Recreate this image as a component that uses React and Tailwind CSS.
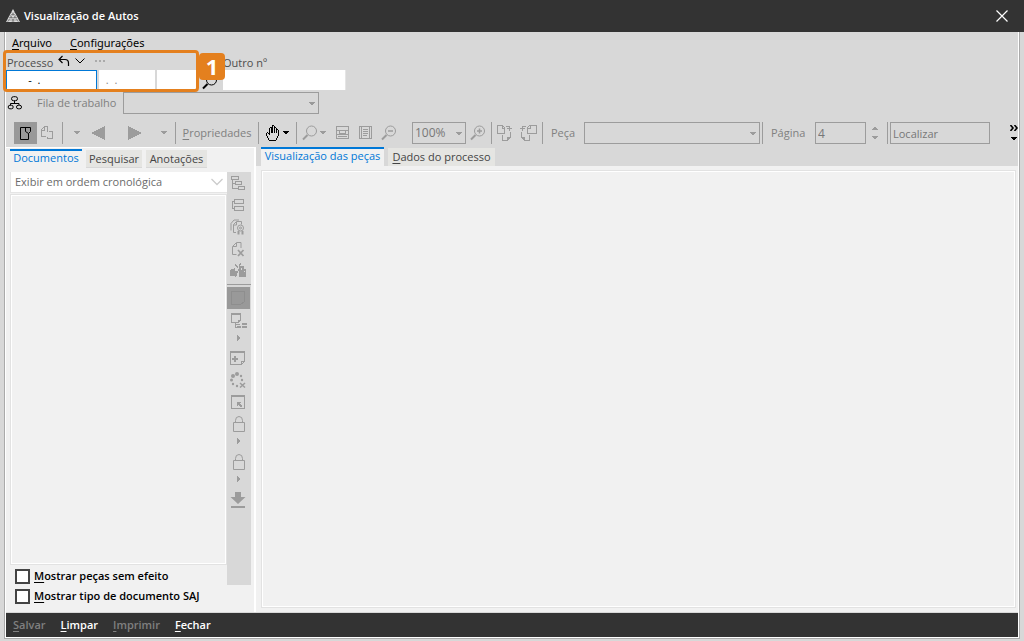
import React from "react";

function Icon({ w = 16, h = 16, crisp = true, className = "", children }) {
  return (
    <svg
      width={w}
      height={h}
      viewBox={`0 0 ${w} ${h}`}
      fill="none"
      stroke="currentColor"
      strokeWidth="1"
      shapeRendering={crisp ? "crispEdges" : "auto"}
      aria-hidden="true"
      className={`shrink-0 ${className}`}
    >
      {children}
    </svg>
  );
}

const Down = ({ className = "" }) => (
  <Icon w={6} h={4} className={className}>
    <path d="M0 0H6L3 3.5Z" fill="currentColor" stroke="none" />
  </Icon>
);

const Side = () => (
  <Icon w={4} h={6}>
    <path d="M0 0V6L3.5 3Z" fill="currentColor" stroke="none" />
  </Icon>
);

const Lock = () => (
  <Icon crisp={false}>
    <path d="M2.500 6.500h11v9h-11z" />
    <path d="M4.500 6V4.500Q4.500 .5 8 .5T11.500 4.500V6" />
  </Icon>
);

const Magnifier = ({ sign }) => (
  <Icon crisp={false}>
    <circle cx="9.500" cy="6" r="5" />
    <path d="M5.500 10L1 14.500" strokeWidth="2" />
    {sign && <path d="M7 6h5" strokeWidth="1.500" />}
    {sign === "plus" && <path d="M9.500 3.500v5" strokeWidth="1.500" />}
  </Icon>
);

const Separator = () => <span className="h-[22px] w-px shrink-0 bg-[#9c9c9c]" />;

function ToolButton({ label, className = "", children }) {
  return (
    <button type="button" aria-label={label} className={`flex shrink-0 items-center justify-center ${className}`}>
      {children}
    </button>
  );
}

function Combo({ label, value = "", className = "" }) {
  return (
    <span className={`relative flex h-[22px] shrink-0 ${className}`}>
      <select
        disabled
        aria-label={label}
        defaultValue={value}
        className="w-full appearance-none border border-[#9c9c9c] bg-[#d8d8d8] px-0.5 text-xs text-[#777] opacity-100"
      >
        <option value={value}>{value}</option>
      </select>
      <Down className="absolute right-1 top-[10px]" />
    </span>
  );
}

function Accel({ text }) {
  return (
    <span>
      <span className="underline underline-offset-2">{text[0]}</span>
      {text.slice(1)}
    </span>
  );
}

function TitleBar() {
  return (
    <header className="flex h-8 shrink-0 items-center justify-between bg-[#333] pl-1.5 pr-4 text-white">
      <div className="flex items-center gap-1">
        <Icon w={14} h={16} crisp={false}>
          <path d="M7 1L0 14H14Z" fill="#dedede" stroke="none" />
          <path d="M5.500 4l7 10M8.500 4l-7 10M4 7l4 7M10 7l-4 7M3 9.500h8M1.500 12h11M5 6.500h4" stroke="#555" strokeWidth=".5" />
        </Icon>
        <h1 className="text-[11px] font-semibold leading-4">Visualização de Autos</h1>
      </div>
      <button type="button" aria-label="Fechar janela">
        <Icon w={12} h={12} crisp={false}>
          <path d="M.5 .5l11 11M11.500 .5L.5 11.500" strokeWidth="1.200" />
        </Icon>
      </button>
    </header>
  );
}

function ProcessBar() {
  return (
    <section className="flex h-[39px] items-end">
      <div className="relative h-[39px] w-[193px] shrink-0">
        <div className="flex h-[18px] items-center pt-1 text-[#4d4d4d]">
          <label htmlFor="processo" className="w-[52px] pl-px text-[11px] leading-4">Processo</label>
          <ToolButton label="Desfazer" className="h-4 w-3 text-black">
            <Icon w={12} h={12} crisp={false} className="-mt-1">
              <path d="M4.500 1L1 4.500L4.500 8M1 4.500h6Q10.500 4.500 10.500 8V11" strokeWidth="1.200" />
            </Icon>
          </ToolButton>
          <ToolButton label="Histórico" className="ml-1 h-4 w-3 text-black">
            <Icon w={10} h={6} crisp={false} className="-mt-1">
              <path d="M.5 .5L5 5L9.500 .5" />
            </Icon>
          </ToolButton>
          <ToolButton label="Mais opções" className="ml-2 h-4 w-3 text-[#aaa]">
            <Icon w={10} h={2} className="-mt-1">
              <path d="M0 1h2M4 1h2M8 1h2" strokeWidth="2" />
            </Icon>
          </ToolButton>
        </div>
        <div className="flex h-5 gap-0.5">
          <input id="processo" defaultValue="      -  ." className="w-[91px] border border-[#0078d7] bg-white px-1 text-[11px] outline-none" />
          <input aria-label="Ano e foro" defaultValue=" .  ." className="w-14 bg-white px-1 text-[11px] text-[#888] outline-none" />
          <input aria-label="Origem" className="min-w-0 flex-1 bg-white px-1 text-[11px] outline-none" />
        </div>
        <div className="pointer-events-none absolute -left-[3px] -top-0.5 h-[42px] w-[196px] rounded-sm border-3 border-[#e4801e]" />
        <div className="pointer-events-none absolute -right-[26px] top-px flex h-[27px] w-[26px] items-center justify-center rounded-sm bg-[#e4801e] text-[22px] font-bold text-white">
          1
        </div>
      </div>
      <ToolButton label="Pesquisar processo" className="h-[18px] w-6 pr-0.5 text-black">
        <Magnifier />
      </ToolButton>
      <div className="flex w-[123px] flex-col self-start">
        <label htmlFor="outro" className="flex h-[18px] items-center pt-1 text-[11px] text-[#4d4d4d]">Outro nº</label>
        <input id="outro" className="h-5 w-full border-r border-[#e5e5e5] bg-white px-1 text-[11px] outline-none" />
      </div>
    </section>
  );
}

function QueueBar() {
  return (
    <section className="flex h-6 items-center text-[#999]">
      <ToolButton label="Fluxo de trabalho" className="w-[18px] text-black">
        <Icon w={16} h={14} crisp={false}>
          <rect x="4.500" y=".7" width="6" height="4" rx="2" />
          <rect x="1.200" y="9.300" width="5" height="3.500" rx="1.700" />
          <rect x="9.500" y="9.300" width="5" height="3.500" rx="1.700" />
          <path d="M7.500 5v2M3.500 9V7.500h8.500V9" />
        </Icon>
      </ToolButton>
      <span className="w-[99px] pl-[13px] text-[11px] text-[#808080]">Fila de trabalho</span>
      <Combo label="Fila de trabalho" className="w-[196px]" />
    </section>
  );
}

function Toolbar() {
  return (
    <section className="mt-[7px] flex h-[25px] items-start overflow-hidden pl-2 text-[11px] text-[#9c9c9c]">
      <div className="flex h-[22px] min-w-0 flex-1 items-center">
        <ToolButton label="Painel" className="h-[22px] w-[23px] bg-[#999] text-black">
          <Icon w={13} h={14} crisp={false}>
            <path d="M1.500 1.500h10v4L9.500 7.500v6h-8zM6.500 2v3.500l3 2" />
          </Icon>
        </ToolButton>
        <ToolButton label="Páginas" className="w-[25px] pr-1.5">
          <Icon w={13} h={14}>
            <path d="M6 10.500H1.500v-7l3-3h3v5M8.500 5.500h4v7h-5v-2M4.500 1v3h-3" />
          </Icon>
        </ToolButton>
        <Separator />
        <ToolButton label="Opções anteriores" className="w-7"><Down /></ToolButton>
        <ToolButton label="Anterior" className="w-3.5">
          <Icon w={14} h={14}><path d="M14 0V14L0 7Z" fill="currentColor" stroke="none" /></Icon>
        </ToolButton>
        <ToolButton label="Próxima" className="ml-[23px] w-3.5">
          <Icon w={14} h={14}><path d="M0 0V14L14 7Z" fill="currentColor" stroke="none" /></Icon>
        </ToolButton>
        <ToolButton label="Opções seguintes" className="w-[33px] pl-[11px]"><Down /></ToolButton>
        <Separator />
        <button type="button" className="w-[82px] shrink-0 text-[#808080]"><Accel text="Propriedades" /></button>
        <Separator />
        <ToolButton label="Mover página" className="w-[37px] gap-1 text-black">
          <Icon w={13} h={16}>
            <path d="M3 15.500h7M2.500 15v-2M10.500 15v-2M1.500 13v-2M11.500 13v-2M.5 11V8M1 7.500h1M2.500 8v1M3.500 10V3M4 2.500h1M5.500 8V2M6 .500h1M6.500 1v7M7 .5h1M8.500 8V1M9 2.500h1M10.500 8V3M11 4.500h1M12.500 11V5" />
          </Icon>
          <Down />
        </ToolButton>
        <Separator />
        <ToolButton label="Lupa" className="w-[34px] gap-0.5"><Magnifier /><Down /></ToolButton>
        <ToolButton label="Ajustar à largura" className="w-[23px]">
          <Icon w={15} h={14}><path d="M1.500 .5h12v12h-12zM1 4.500h13M1 8.500h13M4.500 5v2h6v-2M3 10.500h9" /></Icon>
        </ToolButton>
        <ToolButton label="Página inteira" className="w-[23px]">
          <Icon w={15} h={14}><path d="M1.500 .5h12v12h-12zM3.500 1v12M11.500 1v12M5 3.500h5M5 5.500h5M5 7.500h5M5 9.500h4" /></Icon>
        </ToolButton>
        <ToolButton label="Reduzir" className="w-6"><Magnifier sign="minus" /></ToolButton>
        <Combo label="Zoom" value="100%" className="ml-[11px] w-[54px]" />
        <ToolButton label="Ampliar" className="w-6"><Magnifier sign="plus" /></ToolButton>
        <span className="ml-px flex"><Separator /></span>
        <ToolButton label="Girar à direita" className="w-[27px]">
          <Icon w={17} h={18}><path d="M.5 1.500h5l2 2v6h-7zM5.500 2v2h2M9 2.500h3.500v4M10 4.500h5M5.500 11v5h5l3-3V8M10.500 16v-3h3" /></Icon>
        </ToolButton>
        <ToolButton label="Girar à esquerda" className="mr-1 w-[19px]">
          <Icon w={17} h={18}><path d="M7.500 3.500l2-2h6.500v8h-8.500zM7.500 4.500h3V1.500M6 2.500H2.500v4M0 4.500h5M1.500 8v5l3 3h5v-5M1.500 13h3v3" /></Icon>
        </ToolButton>
        <Separator />
        <span className="w-[41px] shrink-0 pl-2 text-[#808080]">Peça</span>
        <Combo label="Peça" className="w-44" />
        <span className="ml-0.5 flex"><Separator /></span>
        <label htmlFor="pagina" className="w-[52px] shrink-0 pl-2 text-[#808080]">Página</label>
        <input id="pagina" disabled defaultValue="4" className="h-[22px] w-[51px] shrink-0 border border-[#9c9c9c] px-0.5 text-xs text-[#777]" />
        <div className="flex w-[21px] shrink-0 flex-col items-center gap-1.5 pr-[3px]">
          <button type="button" aria-label="Próxima página"><Down className="block rotate-180" /></button>
          <button type="button" aria-label="Página anterior"><Down className="block" /></button>
        </div>
        <Separator />
        <input aria-label="Localizar" disabled defaultValue="Localizar" className="ml-0.5 h-[22px] w-[100px] shrink-0 border border-[#9c9c9c] px-0.5 text-[11px] text-[#777]" />
      </div>
      <ToolButton label="Mais ferramentas" className="h-[22px] flex-col gap-1.5 text-black">
        <Icon w={8} h={6} crisp={false}><path d="M.5 0L3 3L.5 6M4.500 0L7 3L4.500 6" strokeWidth="1.600" /></Icon>
        <Down />
      </ToolButton>
    </section>
  );
}

function SideTools() {
  const slot = "h-[22px] w-full pr-0.5";
  return (
    <aside className="flex w-6 shrink-0 flex-col items-center bg-[#d8d8d8] text-[#9c9c9c]">
      <ToolButton label="Árvore" className={slot}>
        <Icon><path d="M1.500 1.500h7v3h-7zM5.500 6.500h6v3h-6zM8.500 11.500h6v3h-6zM2.500 5v8h6M2.500 8.500h3" /></Icon>
      </ToolButton>
      <ToolButton label="Lista" className={slot}>
        <Icon><path d="M4.500 2.500h9v4h-9zM4.500 9.500h9v4h-9zM2 4.500h2M2.500 4v8M2 11.500h2" /></Icon>
      </ToolButton>
      <ToolButton label="Assinaturas" className={slot}>
        <Icon crisp={false}>
          <path d="M6 13.500H3.500v-8l3-3h5v3M1 11.500v-7l3-3.500h5M6.500 3v3h-3" />
          <circle cx="10.500" cy="9" r="3" /><circle cx="10.500" cy="9" r="1" />
          <path d="M8.500 12v3.500M12.500 12v3.500" strokeWidth="2" />
        </Icon>
      </ToolButton>
      <ToolButton label="Excluir documento" className={slot}>
        <Icon crisp={false}><path d="M6.500 13.500H2.500v-8l4-4h4.500V7M6.500 2v3.500H3" /><path d="M8 9l5.500 6M13.500 9L8 15" strokeWidth="1.700" /></Icon>
      </ToolButton>
      <ToolButton label="Desmembrar" className={slot}>
        <Icon>
          <path d="M0 7l5-2v3h2v5H0zM9 3h5v11H9zM13 6h3v8h-3z" fill="currentColor" stroke="none" />
          <path d="M5 1l3 4M11 0L9 3M9 6l-4 8" /><path d="M11.500 5v2M14.500 8v1" stroke="#d8d8d8" />
        </Icon>
      </ToolButton>
      <hr className="my-0.5 w-full border-[#9c9c9c]" />
      <ToolButton label="Documento" className="h-[22px] w-[23px] self-start bg-[#999] pr-px text-[#8e8e8e]">
        <Icon><path d="M1.500 1.500h13v10l-4 3h-9z" /></Icon>
      </ToolButton>
      <ToolButton label="Organizar" className="h-6 w-full">
        <Icon><path d="M.5 .5h9v7l-2 2h-7zM0 1.500h10M7.500 9V7.500h2M4.500 10v4.500h4M5 11.500h4" /><path d="M11 11h5M11 14h5M6 14h4" strokeWidth="2" /></Icon>
      </ToolButton>
      <ToolButton label="Organizar: opções" className="h-2.5 w-full"><Side /></ToolButton>
      <ToolButton label="Nova nota" className="h-[30px] w-full pr-0.5">
        <Icon><path d="M.5 1.500h14v10l-3 3H.5zM0 2.500h15M11.500 14v-2.500h3" /><path d="M5 6v6M2 9h6" strokeWidth="2" /></Icon>
      </ToolButton>
      <ToolButton label="Limpar seleção" className="h-3.5 w-full pr-0.5">
        <Icon crisp={false}><g fill="currentColor" stroke="none"><circle cx="7" cy="2" r="2" /><circle cx="3" cy="4" r="2" /><circle cx="11" cy="4" r="1.200" /><circle cx="1.500" cy="8" r="1.500" /><circle cx="12" cy="8" r="1.200" /><circle cx="3" cy="12" r="1.200" /><circle cx="7" cy="14" r="1.200" /></g><path d="M10 11l5 4.500M15 11l-5 4.500" strokeWidth="1.500" /></Icon>
      </ToolButton>
      <ToolButton label="Abrir em nova janela" className="h-[30px] w-full pr-0.5">
        <Icon><path d="M1.500 1.500h13v13h-13z" /><path d="M1 2h14" strokeWidth="2" /><path d="M12 13L7.500 8.500M7.500 12V8.500H11" strokeWidth="1.500" /></Icon>
      </ToolButton>
      <ToolButton label="Bloquear" className="h-3.5 w-full"><Lock /></ToolButton>
      <ToolButton label="Bloquear: opções" className="h-5 w-full"><Side /></ToolButton>
      <ToolButton label="Sigilo" className="h-[22px] w-full"><Lock /></ToolButton>
      <ToolButton label="Sigilo: opções" className="h-3 w-full"><Side /></ToolButton>
      <ToolButton label="Baixar" className="h-[30px] w-full pr-0.5">
        <Icon crisp={false}><path d="M5 0h6v5h4.500L8 12L.5 5H5zM1 14h14v2H1z" fill="currentColor" stroke="none" /></Icon>
      </ToolButton>
    </aside>
  );
}

function Check({ id, label }) {
  return (
    <label htmlFor={id} className="flex h-5 items-center gap-1 text-[11px] font-semibold text-black">
      <input id={id} type="checkbox" className="size-[15px] shrink-0 appearance-none border-2 border-[#444] bg-white" />
      <Accel text={label} />
    </label>
  );
}

function DocumentsPanel() {
  const tab = "h-[18px] bg-[#e5e5e2] text-[#444] border-b border-[#d8d8d8] pt-px";
  return (
    <section className="flex w-[250px] shrink-0 flex-col border-r-2 border-t border-white bg-[#f1f1f1] pl-1 pt-px text-[11px]">
      <div role="tablist" className="flex items-end gap-1">
        <button role="tab" aria-selected="true" type="button" className="h-[19px] w-[72px] border-t-2 border-[#0078d7] pb-1 leading-3 text-[#0078d7]">Documentos</button>
        <button role="tab" aria-selected="false" type="button" className={`w-14 ${tab}`}>Pesquisar</button>
        <button role="tab" aria-selected="false" type="button" className={`w-[61px] ${tab}`}>Anotações</button>
      </div>
      <div className="mt-1 flex flex-1">
        <div className="flex min-w-0 flex-1 flex-col">
          <span className="relative flex h-[21px] border-b border-l border-[#e5e5e5]">
            <select aria-label="Ordem de exibição" className="w-full appearance-none bg-white px-1 text-[11px] text-[#6b6b6b] outline-none">
              <option>Exibir em ordem cronológica</option>
            </select>
            <Icon w={12} h={8} crisp={false} className="pointer-events-none absolute right-1 top-1.5 text-[#ccc]">
              <path d="M.5 1L6 6.500L11.500 1" strokeWidth="1.300" />
            </Icon>
          </span>
          <div className="mt-px flex flex-1 border border-[#e2e2e2]"><div className="flex-1 border border-white" /></div>
          <div className="flex flex-col pb-1.5 pl-[5px] pt-px">
            <Check id="sem-efeito" label="Mostrar peças sem efeito" />
            <Check id="tipo-saj" label="Mostrar tipo de documento SAJ" />
          </div>
        </div>
        <div className="mb-[27px] mr-[3px] flex"><SideTools /></div>
      </div>
    </section>
  );
}

function Viewer() {
  return (
    <section className="flex min-w-0 flex-1 flex-col">
      <div role="tablist" className="flex h-[19px] items-end gap-1 bg-[#d8d8d8] pl-[5px] text-[11px]">
        <button role="tab" aria-selected="true" type="button" className="h-[19px] w-[123px] border-t-2 border-[#0078d7] bg-[#f1f1f1] pb-1 leading-3 text-[#0078d7]">Visualização das peças</button>
        <button role="tab" aria-selected="false" type="button" className="h-[18px] w-[107px] bg-[#e5e5e2] text-[#444]"><Accel text="Dados do processo" /></button>
      </div>
      <div className="flex flex-1 bg-[#f1f1f1] pb-1 pl-[5px] pr-0.5 pt-1">
        <div className="flex flex-1 border border-[#e2e2e2]"><div className="flex-1 border border-white" /></div>
      </div>
    </section>
  );
}

export default function App() {
  return (
    <div className="flex min-h-screen flex-col bg-[#d8d8d8] font-['Open_Sans','Noto_Sans',sans-serif]">
      <TitleBar />
      <div className="mx-1 mb-0.5 flex flex-1 flex-col border border-t-0 border-[#aaa]">
        <main className="flex flex-1 flex-col border border-t-0 border-white">
          <nav className="flex h-5 items-center gap-[18px] pl-1.5 pt-0.5 font-['Noto_Sans',sans-serif] text-[11px] text-black">
            <button type="button"><Accel text="Arquivo" /></button>
            <button type="button"><Accel text="Configurações" /></button>
          </nav>
          <ProcessBar />
          <QueueBar />
          <Toolbar />
          <div className="flex flex-1">
            <DocumentsPanel />
            <Viewer />
          </div>
          <footer className="mt-px flex h-6 items-center gap-[15px] bg-[#333] px-[7px] text-[11px] font-semibold text-white">
            <button type="button" disabled className="text-[#808080]"><Accel text="Salvar" /></button>
            <button type="button"><Accel text="Limpar" /></button>
            <button type="button" disabled className="text-[#808080]"><Accel text="Imprimir" /></button>
            <button type="button"><Accel text="Fechar" /></button>
          </footer>
        </main>
      </div>
    </div>
  );
}
